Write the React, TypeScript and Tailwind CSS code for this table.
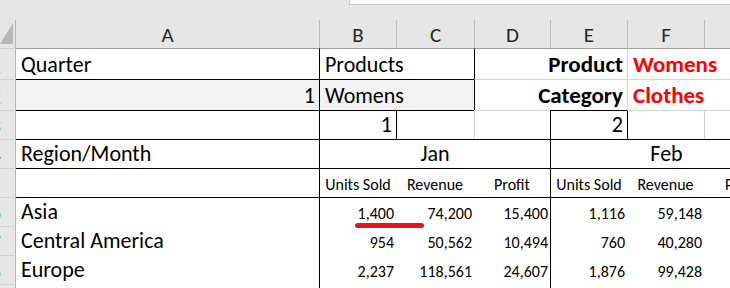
import type { ReactNode } from 'react';

const FONT = "font-['Carlito','Lato',sans-serif]";

function Cell({ className = '', children }: { className?: string; children?: ReactNode }) {
  return <div className={`flex min-w-0 items-end whitespace-nowrap leading-none ${className}`}>{children}</div>;
}

function RowNum({ n }: { n: number }) {
  return (
    <div className="flex items-end justify-end overflow-hidden border-r border-t border-r-[#b4b4b4] border-t-[#d2d2d2] bg-[#e6e6e6] pr-[14px] pb-[3px] text-[20px] leading-none text-[#2563b0]">
      {n}
    </div>
  );
}

function ColHead({ label, first = false }: { label: string; first?: boolean }) {
  return (
    <Cell className={`justify-center bg-[#e6e6e6] pb-[2px] text-[21px] text-[#262626] ${first ? '' : 'border-l border-l-[#bdbdbd]'}`}>
      {label}
    </Cell>
  );
}

const jan = [
  ['1,400', '74,200', '15,400'],
  ['954', '50,562', '10,494'],
  ['2,237', '118,561', '24,607'],
];
const feb = [
  ['1,116', '59,148', '12,276'],
  ['760', '40,280', '8,360'],
  ['1,876', '99,428', '20,636'],
];
const regions = ['Asia', 'Central America', 'Europe'];

export default function App() {
  return (
    <div className={`relative h-[288px] w-[730px] overflow-hidden bg-white text-black ${FONT}`}>
      {/* formula bar edge */}
      <div className="flex h-[20px] bg-[#e6e6e6]">
        <div className="w-[349px]" />
        <div className="h-[5px] flex-1 border-b border-l border-[#c6c6c6] bg-white" />
      </div>

      <div className="grid w-[782px] grid-cols-[16px_303px_77px_78px_76px_77px_77px_78px] grid-rows-[28px_31px_31px_29px_29px_29px_29px_29px_29px_29px]">
        {/* column letters */}
        <div className="relative border-r border-r-[#b4b4b4] bg-[#e6e6e6]">
          <svg className="absolute left-0 top-[3px]" width="14" height="22" viewBox="0 0 14 22">
            <polygon points="13,0 13,21 0,21" fill="#b7b7b7" />
          </svg>
        </div>
        <ColHead label="A" first />
        <ColHead label="B" />
        <ColHead label="C" />
        <ColHead label="D" />
        <ColHead label="E" />
        <ColHead label="F" />
        <ColHead label="G" />

        {/* row 1 */}
        <RowNum n={1} />
        <Cell className="border-t border-t-[#9e9e9e] pl-[5px] pb-[3px] text-[22px]">Quarter</Cell>
        <Cell className="col-span-2 border-l border-t border-l-black border-t-[#9e9e9e] pl-[5px] pb-[3px] text-[22px]">Products</Cell>
        <Cell className="col-span-2 justify-end border-l border-t border-l-black border-t-[#9e9e9e] pr-[4px] pb-[3px] text-[23px] font-bold">Product</Cell>
        <Cell className="col-span-2 border-l border-t border-l-[#d4d4d4] border-t-[#9e9e9e] pl-[5px] pb-[3px] text-[23px] font-bold text-[#ff0000]">Womens</Cell>

        {/* row 2 */}
        <RowNum n={2} />
        <Cell className="justify-end border-t border-t-black bg-[#f2f2f2] pr-[4px] pb-[3px] text-[22px]">1</Cell>
        <Cell className="col-span-2 border-l border-t border-black bg-[#f2f2f2] pl-[5px] pb-[3px] text-[22px]">Womens</Cell>
        <Cell className="col-span-2 justify-end border-l border-t border-l-black border-t-[#d4d4d4] pr-[4px] pb-[3px] text-[23px] font-bold">Category</Cell>
        <Cell className="col-span-2 border-l border-t border-[#d4d4d4] pl-[5px] pb-[3px] text-[23px] font-bold text-[#ff0000]">Clothes</Cell>

        {/* row 3 */}
        <RowNum n={3} />
        <Cell className="border-t border-t-black" />
        <Cell className="justify-end border-l border-t border-black pr-[4px] pb-[3px] text-[22px]">1</Cell>
        <Cell className="border-l border-t border-black" />
        <Cell className="border-l border-t border-[#d4d4d4]" />
        <Cell className="justify-end border-l border-t border-black pr-[4px] pb-[3px] text-[22px]">2</Cell>
        <Cell className="border-l border-t border-l-black border-t-[#d4d4d4]" />
        <Cell className="border-l border-t border-[#d4d4d4]" />

        {/* row 4 */}
        <RowNum n={4} />
        <Cell className="border-t border-t-black pl-[5px] pb-[3px] text-[22px]">Region/Month</Cell>
        <Cell className="col-span-3 justify-center border-l border-t border-black pb-[3px] text-[22px]">Jan</Cell>
        <Cell className="col-span-3 justify-center border-l border-t border-black pb-[3px] text-[22px]">Feb</Cell>

        {/* row 5 */}
        <RowNum n={5} />
        <Cell className="border-t border-t-black" />
        {['Units Sold', 'Revenue', 'Profit', 'Units Sold', 'Revenue', 'Profit'].map((h, i) => (
          <Cell
            key={i}
            className={`justify-center border-t border-t-black pb-[4px] text-[16px] ${i === 0 || i === 3 ? 'border-l border-l-black' : ''}`}
          >
            {h}
          </Cell>
        ))}

        {/* data rows */}
        {regions.map((r, ri) => (
          <div key={r} className="contents">
            <RowNum n={6 + ri} />
            <Cell className={`pl-[5px] pb-[3px] text-[22px] ${ri === 0 ? 'border-t border-t-black' : ''}`}>{r}</Cell>
            {[...jan[ri], ...feb[ri]].map((v, i) => (
              <Cell
                key={i}
                className={`justify-end pr-[2px] pb-[4px] text-[16px] ${ri === 0 ? 'border-t border-t-black' : ''} ${i === 0 || i === 3 ? 'border-l border-l-black' : ''}`}
              >
                {v}
              </Cell>
            ))}
          </div>
        ))}

        {/* row 9 (cut off) */}
        <RowNum n={9} />
        <Cell />
        <Cell className="border-l border-l-black" />
        <Cell />
        <Cell />
        <Cell className="border-l border-l-black" />
        <Cell />
        <Cell />
      </div>

      {/* hand-drawn highlight under 1,400 */}
      <div className="absolute left-[355px] top-[223px] h-[5px] w-[69px] rounded-full bg-[#e4161c]" />
    </div>
  );
}
